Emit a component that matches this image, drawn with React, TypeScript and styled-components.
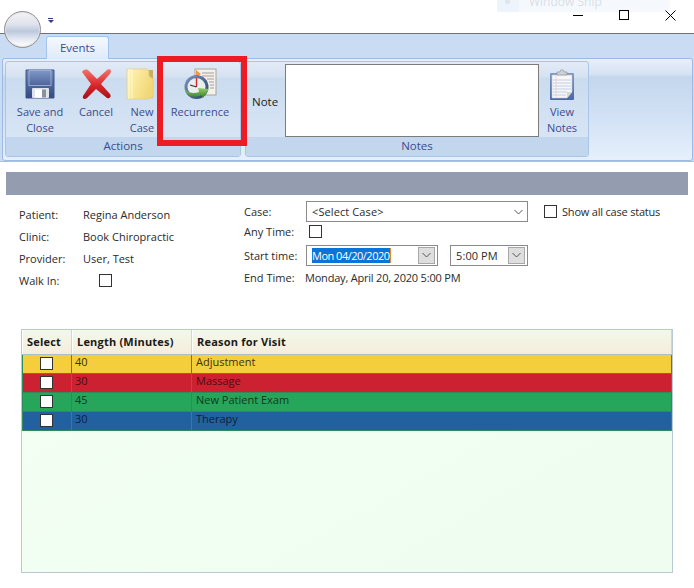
import React from 'react';
import styled, { createGlobalStyle } from 'styled-components';

const UI_FONT = '"Open Sans", "Liberation Sans", sans-serif';

const GlobalStyle = createGlobalStyle`
    html, body {
        margin: 0;
        padding: 0;
        background: #ffffff;
    }
    body {
        width: 694px;
        height: 588px;
        overflow: hidden;
        font-family: ${UI_FONT};
    }
`;

const Chevron: React.FC<{ color?: string }> = ({ color = '#555' }) => (
    <svg width="9" height="6" viewBox="0 0 9 6">
        <path d="M0.5 1 L4.5 5 L8.5 1" fill="none" stroke={color} strokeWidth="1" />
    </svg>
);

const FloppyIcon = () => (
    <svg width="30" height="30" viewBox="0 0 30 30">
        <defs>
            <linearGradient id="floppyBody" x1="0" y1="0" x2="0" y2="1">
                <stop offset="0" stopColor="#6f89bd" />
                <stop offset="1" stopColor="#31497f" />
            </linearGradient>
            <linearGradient id="floppyLabel" x1="0" y1="0" x2="0" y2="1">
                <stop offset="0" stopColor="#7f96c6" />
                <stop offset="1" stopColor="#4d659c" />
            </linearGradient>
        </defs>
        <path d="M1 1 H29 V29 H1 Z" fill="url(#floppyBody)" stroke="#3d5488" />
        <rect x="4" y="1.5" width="22" height="15" fill="url(#floppyLabel)" stroke="#a9b9d8" strokeWidth="0.8" />
        <rect x="7" y="19" width="17" height="10" rx="1" fill="#dfe3ea" />
        <rect x="10" y="20.5" width="7" height="8" fill="#ffffff" />
        <rect x="17" y="20.5" width="4" height="8" fill="#8b919c" />
    </svg>
);

const CancelIcon = () => (
    <svg width="32" height="32" viewBox="0 0 32 32">
        <defs>
            <linearGradient id="cancelFill" x1="0" y1="0" x2="0" y2="1">
                <stop offset="0" stopColor="#f4736a" />
                <stop offset="0.55" stopColor="#d9252a" />
                <stop offset="1" stopColor="#a30f16" />
            </linearGradient>
        </defs>
        <path
            d="M2 4 C4 1 7 1 9 3 L17 11 L27 2 C28 1 31 1 31 3 C31 5 29 7 28 8 L21 16 L30 26 C32 29 29 31 27 30 L16 21 L7 30 C5 32 2 31 3 28 L11 16 Z"
            fill="url(#cancelFill)"
        />
    </svg>
);

const FolderIcon = () => (
    <svg width="28" height="32" viewBox="0 0 28 32">
        <defs>
            <linearGradient id="folderFill" x1="0" y1="0" x2="1" y2="0.4">
                <stop offset="0" stopColor="#fff6b8" />
                <stop offset="1" stopColor="#f2d777" />
            </linearGradient>
        </defs>
        <path d="M22 2 H27 V30 H22 Z" fill="#c9ae62" />
        <path d="M1 1 H21 L23 3 V8 L27 11 V29 L22 31 H1 Z" fill="url(#folderFill)" stroke="#e1c675" strokeWidth="0.6" />
        <path d="M3 1 V31 M6 1 V31" stroke="#fffbe0" strokeWidth="0.8" />
    </svg>
);

const RecurrenceIcon = () => (
    <svg width="34" height="32" viewBox="0 0 34 32">
        <defs>
            <linearGradient id="clockRim" x1="0" y1="0" x2="1" y2="1">
                <stop offset="0" stopColor="#7d9bc0" />
                <stop offset="1" stopColor="#26405f" />
            </linearGradient>
            <linearGradient id="arrowFill" x1="0" y1="0" x2="0" y2="1">
                <stop offset="0" stopColor="#a5d56a" />
                <stop offset="1" stopColor="#2f7f2f" />
            </linearGradient>
        </defs>
        <rect x="12" y="1" width="21" height="26" fill="#f3f1ea" stroke="#a5a5a0" />
        <path d="M19 5 H31 M19 8 H31 M24 11 H31 M26 14 H31 M27 17 H31 M27 20 H31" stroke="#9e9e9e" strokeWidth="1" />
        <path d="M13 2 L18 6 L13 9 Z" fill="#ef9a3c" />
        <circle cx="13.5" cy="19" r="12" fill="url(#clockRim)" />
        <circle cx="13.5" cy="19" r="9" fill="#e9eef2" />
        <path d="M13.5 19 V10" stroke="#d42a2a" strokeWidth="1.4" />
        <path d="M13.5 19 L7 17" stroke="#333" strokeWidth="1.2" />
        <path d="M1 19 C3 25 10 26 16 24 L15 20 L26 21 L20 30 L18 27 C10 31 3 28 1 19 Z" fill="url(#arrowFill)" />
    </svg>
);

const ClipboardIcon = () => (
    <svg width="26" height="33" viewBox="0 0 26 33">
        <defs>
            <linearGradient id="boardFill" x1="0" y1="0" x2="0" y2="1">
                <stop offset="0" stopColor="#7f9ac9" />
                <stop offset="1" stopColor="#476aa8" />
            </linearGradient>
        </defs>
        <rect x="1" y="5" width="24" height="27" rx="1" fill="url(#boardFill)" />
        <path d="M3 7 H23 V24 L18 30 H3 Z" fill="#f7f7f5" stroke="#c8c8c4" strokeWidth="0.6" />
        <path d="M18 30 L18 24 H23 Z" fill="#d8d8d4" />
        <path d="M4 12 H22 M4 15 H22 M4 18 H22 M4 21 H22 M4 24 H18 M4 27 H17" stroke="#b9c8e4" strokeWidth="0.8" />
        <path d="M7 8 V29" stroke="#e8c8d0" strokeWidth="0.7" />
        <path d="M8 7 V4 H11 C11 1 15 1 15 4 H18 V7 Z" fill="#cfd2d6" stroke="#8e9298" strokeWidth="0.7" />
    </svg>
);

const App: React.FC = () => {
    const rows = [
        { minutes: '40', reason: 'Adjustment', bg: '#f4cf3b', fg: '#3a3214' },
        { minutes: '30', reason: 'Massage', bg: '#cc2130', fg: '#4c0c14' },
        { minutes: '45', reason: 'New Patient Exam', bg: '#26a65a', fg: '#0e3a22' },
        { minutes: '30', reason: 'Therapy', bg: '#22619f', fg: '#0b2239' },
    ];

    return (
        <Page>
            <GlobalStyle />
            <WatermarkStrip>
                <WatermarkDot />
                <WatermarkText>Window Snip</WatermarkText>
            </WatermarkStrip>
            <Orb />
            <TitleBar>
                <QuickAccess>
                    <QuickLine />
                    <QuickArrow />
                </QuickAccess>
                <WindowControls>
                    <svg width="11" height="11" viewBox="0 0 11 11"><path d="M0 5.5 H10" stroke="#000" /></svg>
                    <svg width="11" height="11" viewBox="0 0 11 11"><rect x="0.5" y="0.5" width="9" height="9" fill="none" stroke="#000" /></svg>
                    <svg width="11" height="11" viewBox="0 0 11 11"><path d="M0.5 0.5 L10.5 10.5 M10.5 0.5 L0.5 10.5" stroke="#000" /></svg>
                </WindowControls>
            </TitleBar>
            <Ribbon>
                <TabStrip>
                    <Tab>Events</Tab>
                </TabStrip>
                <RibbonBody>
                    <RibbonGroup $width={236}>
                        <GroupContent $paddingLeft={6}>
                            <RibbonButton $width={56}>
                                <IconSlot><FloppyIcon /></IconSlot>
                                Save and<br />Close
                            </RibbonButton>
                            <RibbonButton $width={56}>
                                <IconSlot><CancelIcon /></IconSlot>
                                Cancel
                            </RibbonButton>
                            <RibbonButton $width={36}>
                                <IconSlot $nudge={4}><FolderIcon /></IconSlot>
                                New<br />Case
                            </RibbonButton>
                            <RibbonButton $width={80}>
                                <IconSlot><RecurrenceIcon /></IconSlot>
                                Recurrence
                            </RibbonButton>
                        </GroupContent>
                        <GroupCaption>Actions</GroupCaption>
                    </RibbonGroup>
                    <RibbonGroup $width={344}>
                        <GroupContent $paddingLeft={6}>
                            <NoteLabel>Note</NoteLabel>
                            <NoteBox />
                            <RibbonButton $width={46}>
                                <IconSlot><ClipboardIcon /></IconSlot>
                                View<br />Notes
                            </RibbonButton>
                        </GroupContent>
                        <GroupCaption>Notes</GroupCaption>
                    </RibbonGroup>
                </RibbonBody>
            </Ribbon>
            <HighlightBox />
            <Content>
                <SectionBar />
                <FormArea>
                    <PatientInfo>
                        <InfoLabel>Patient:</InfoLabel><InfoValue>Regina Anderson</InfoValue>
                        <InfoLabel>Clinic:</InfoLabel><InfoValue>Book Chiropractic</InfoValue>
                        <InfoLabel>Provider:</InfoLabel><InfoValue>User, Test</InfoValue>
                        <InfoLabel>Walk In:</InfoLabel><InfoValue><CheckBox $indent={16} /></InfoValue>
                    </PatientInfo>
                    <BookingInfo>
                        <BookingRow $height={21}>
                            <BookingLabel>Case:</BookingLabel>
                            <Combo $width={222} $height={21}>
                                <ComboText>&lt;Select Case&gt;</ComboText>
                                <Chevron />
                            </Combo>
                            <CheckBox $indent={16} />
                            <CheckCaption>Show all case status</CheckCaption>
                        </BookingRow>
                        <BookingRow $height={19}>
                            <BookingLabel>Any Time:</BookingLabel>
                            <CheckBox $indent={3} />
                        </BookingRow>
                        <BookingRow $height={28}>
                            <BookingLabel>Start time:</BookingLabel>
                            <Combo $width={132} $height={21}>
                                <SelectedText>Mon 04/20/2020</SelectedText>
                                <SpinButton><Chevron /></SpinButton>
                            </Combo>
                            <TimeGap />
                            <Combo $width={78} $height={21}>
                                <ComboText>5:00 PM</ComboText>
                                <SpinButton><Chevron /></SpinButton>
                            </Combo>
                        </BookingRow>
                        <BookingRow $height={17}>
                            <BookingLabel>End Time:</BookingLabel>
                            <EndTimeValue>Monday, April 20, 2020 5:00 PM</EndTimeValue>
                        </BookingRow>
                    </BookingInfo>
                </FormArea>
                <ReasonGrid>
                    <GridHeader>
                        <HeaderCell>Select</HeaderCell>
                        <HeaderCell>Length (Minutes)</HeaderCell>
                        <HeaderCell>Reason for Visit</HeaderCell>
                    </GridHeader>
                    {rows.map((row) => (
                        <GridRow key={row.reason} $bg={row.bg} $fg={row.fg}>
                            <SelectCell><RowCheck /></SelectCell>
                            <DataCell>{row.minutes}</DataCell>
                            <DataCell>{row.reason}</DataCell>
                        </GridRow>
                    ))}
                </ReasonGrid>
            </Content>
        </Page>
    );
};

export default App;

const Page = styled.div`
    position: relative;
    width: 694px;
    height: 588px;
    overflow: hidden;
    background: #ffffff;
`;

const WatermarkStrip = styled.div`
    position: absolute;
    top: 0;
    left: 497px;
    width: 173px;
    height: 12px;
    display: flex;
    overflow: hidden;
    background: #f5f9fd;
`;

const WatermarkDot = styled.span`
    width: 22px;
    background: #eef4fb;
    position: relative;
    &::after {
        content: '';
        position: absolute;
        left: 8px;
        top: 0;
        width: 5px;
        height: 4px;
        border-radius: 0 0 3px 3px;
        background: #dde6f0;
    }
`;

const WatermarkText = styled.span`
    margin: -6px 0 0 10px;
    font-size: 12px;
    line-height: 16px;
    color: #d9dfe6;
`;

const Orb = styled.div`
    position: absolute;
    z-index: 3;
    left: 4px;
    top: 11px;
    width: 37px;
    height: 37px;
    box-sizing: border-box;
    border-radius: 50%;
    border: 1px solid #8f8f8f;
    box-shadow: inset 0 0 0 1px #e4e4e4;
    background: linear-gradient(180deg, #f3f3f5 0%, #dfe3ec 35%, #bcc8de 55%, #e4e9f2 78%, #ffffff 100%);
`;

const TitleBar = styled.div`
    height: 33px;
    display: flex;
    justify-content: space-between;
    background: transparent;
`;

const QuickAccess = styled.div`
    margin: 18px 0 0 48px;
    display: flex;
    flex-direction: column;
    align-items: center;
    gap: 1px;
    width: 5px;
`;

const QuickLine = styled.span`
    width: 5px;
    height: 1px;
    background: #2c3f80;
`;

const QuickArrow = styled.span`
    width: 0;
    height: 0;
    border-left: 3px solid transparent;
    border-right: 3px solid transparent;
    border-top: 3px solid #2c3f80;
`;

const WindowControls = styled.div`
    margin: 10px 18px 0 0;
    display: flex;
    gap: 35px;
    position: relative;
    z-index: 1;
`;

const Ribbon = styled.div`
    height: 129px;
    box-sizing: border-box;
    border-top: 1px solid #6f7276;
    border-bottom: 1px solid #a9c1e2;
    background: #c9dcf4;
`;

const TabStrip = styled.div`
    height: 24px;
    padding-left: 46px;
    display: flex;
    align-items: flex-end;
`;

const Tab = styled.div`
    width: 63px;
    height: 23px;
    box-sizing: border-box;
    margin-bottom: -1px;
    position: relative;
    z-index: 1;
    border: 1px solid #a3c3ec;
    border-bottom: none;
    border-radius: 3px 3px 0 0;
    background: linear-gradient(180deg, #f5f9fe 0%, #dfeafa 100%);
    color: #3c4c8c;
    font-size: 11.5px;
    line-height: 22px;
    text-align: center;
`;

const RibbonBody = styled.div`
    height: 103px;
    margin: 0 1px 0 2px;
    padding: 2px 2px 0;
    box-sizing: border-box;
    display: flex;
    gap: 4px;
    border: 1px solid #9cbbe4;
    border-radius: 3px;
    background: linear-gradient(180deg, #e8eff9 0%, #d6e3f3 15%, #c4d7ee 18%, #d3e2f5 60%, #e6f0fc 100%);
`;

const RibbonGroup = styled.div<{ $width: number }>`
    width: ${(p) => p.$width}px;
    height: 96px;
    box-sizing: border-box;
    display: flex;
    flex-direction: column;
    border: 1px solid #a9c6e8;
    border-radius: 3px;
    overflow: hidden;
    background: linear-gradient(180deg, #e2eaf6 0%, #d7e3f2 15%, #cbdcf0 18%, #dbe7f6 100%);
`;

const GroupContent = styled.div<{ $paddingLeft: number }>`
    flex: 1;
    display: flex;
    min-height: 0;
    padding-left: ${(p) => p.$paddingLeft}px;
`;

const GroupCaption = styled.div`
    height: 19px;
    background: #c2d7ee;
    color: #3c4c8c;
    font-size: 11.5px;
    line-height: 18px;
    text-align: center;
`;

const RibbonButton = styled.div<{ $width: number }>`
    width: ${(p) => p.$width}px;
    flex: none;
    color: #3c4c8c;
    font-size: 11px;
    line-height: 16px;
    text-align: center;
    white-space: nowrap;
`;

const IconSlot = styled.div<{ $nudge?: number }>`
    height: 42px;
    display: flex;
    align-items: center;
    justify-content: center;
    padding: 2px ${(p) => p.$nudge ?? 0}px 0 0;
    box-sizing: border-box;
`;

const NoteLabel = styled.div`
    width: 33px;
    flex: none;
    color: #222222;
    font-size: 11.5px;
    line-height: 80px;
`;

const NoteBox = styled.div`
    width: 254px;
    height: 73px;
    flex: none;
    margin-top: 2px;
    box-sizing: border-box;
    border: 1px solid #7c7c7c;
    background: #ffffff;
`;

const HighlightBox = styled.div`
    position: absolute;
    z-index: 2;
    left: 157px;
    top: 56px;
    width: 90px;
    height: 90px;
    box-sizing: border-box;
    border: 6px solid #ed1c24;
`;

const Content = styled.div`
    padding: 10px 6px 0;
`;

const SectionBar = styled.div`
    height: 23px;
    background: #949cb0;
`;

const FormArea = styled.div`
    height: 134px;
    display: flex;
    padding: 6px 0 0 13px;
    box-sizing: border-box;
`;

const PatientInfo = styled.div`
    width: 225px;
    margin-top: 2px;
    display: grid;
    grid-template-columns: 64px 1fr;
    grid-auto-rows: 22px;
    align-items: center;
    font-size: 11px;
    color: #2b2b2b;
    flex: none;
`;

const InfoLabel = styled.div``;

const InfoValue = styled.div`
    display: flex;
    align-items: center;
`;

const BookingInfo = styled.div`
    display: flex;
    flex-direction: column;
    font-size: 11px;
    color: #2b2b2b;
`;

const BookingRow = styled.div<{ $height: number }>`
    height: ${(p) => p.$height}px;
    display: flex;
    align-items: center;
`;

const BookingLabel = styled.div`
    width: 62px;
    flex: none;
`;

const CheckBox = styled.span<{ $indent: number }>`
    width: 13px;
    height: 13px;
    flex: none;
    margin-left: ${(p) => p.$indent}px;
    box-sizing: border-box;
    border: 1px solid #333333;
    background: #ffffff;
`;

const CheckCaption = styled.span`
    margin-left: 5px;
    letter-spacing: -0.2px;
`;

const Combo = styled.div<{ $width: number; $height: number }>`
    width: ${(p) => p.$width}px;
    height: ${(p) => p.$height}px;
    flex: none;
    box-sizing: border-box;
    display: flex;
    align-items: center;
    justify-content: space-between;
    padding: 0 4px 0 5px;
    border: 1px solid #8a8a8a;
    background: #ffffff;
`;

const ComboText = styled.span`
    letter-spacing: 0.1px;
`;

const SelectedText = styled.span`
    background: #0a74d8;
    color: #ffffff;
    line-height: 15px;
    letter-spacing: -0.5px;
    border-right: 1px solid #e08a2c;
    margin-right: auto;
`;

const SpinButton = styled.span`
    width: 17px;
    height: 17px;
    margin-right: -2px;
    display: flex;
    align-items: center;
    justify-content: center;
    box-sizing: border-box;
    border: 1px solid #a8a8a8;
    background: #dedede;
`;

const TimeGap = styled.span`
    width: 12px;
    flex: none;
`;

const EndTimeValue = styled.span`
    margin-left: -1px;
    letter-spacing: -0.2px;
`;

const ReasonGrid = styled.div`
    width: 652px;
    height: 244px;
    margin-left: 15px;
    box-sizing: border-box;
    border: 1px solid #b9c8d2;
    background: linear-gradient(150deg, #f4fff4 0%, #eefdf0 100%);
`;

const GridHeader = styled.div`
    height: 24px;
    display: grid;
    grid-template-columns: 50px 120px 1fr;
    border-bottom: 1px solid #a9c0c8;
    background: linear-gradient(180deg, #f1f9e9 0%, #f6ecdc 100%);
`;

const HeaderCell = styled.div`
    padding-left: 4px;
    box-sizing: border-box;
    border-left: 1px solid #ffffff;
    border-right: 1px solid #e0d2c2;
    color: #1a1a1a;
    font-size: 11px;
    font-weight: 700;
    letter-spacing: 0.2px;
    line-height: 24px;
`;

const GridRow = styled.div<{ $bg: string; $fg: string }>`
    height: 19px;
    display: grid;
    grid-template-columns: 49px 120px 1fr;
    box-sizing: border-box;
    border: solid #2f8a5c;
    border-width: 0 1px 1px 1px;
    background: ${(p) => p.$bg};
    color: ${(p) => p.$fg};
    font-size: 11px;
    line-height: 13px;
`;

const SelectCell = styled.div`
    display: flex;
    align-items: center;
    justify-content: center;
    padding: 0 1px 1px 0;
    border-right: 1px solid #2f8a5c;
`;

const RowCheck = styled.span`
    width: 13px;
    height: 13px;
    box-sizing: border-box;
    border: 1px solid #333333;
    background: #ffffff;
`;

const DataCell = styled.div`
    padding-left: 3px;
    border-right: 1px solid #2f8a5c;
    &:last-child {
        padding-left: 4px;
        border-right: none;
    }
`;
